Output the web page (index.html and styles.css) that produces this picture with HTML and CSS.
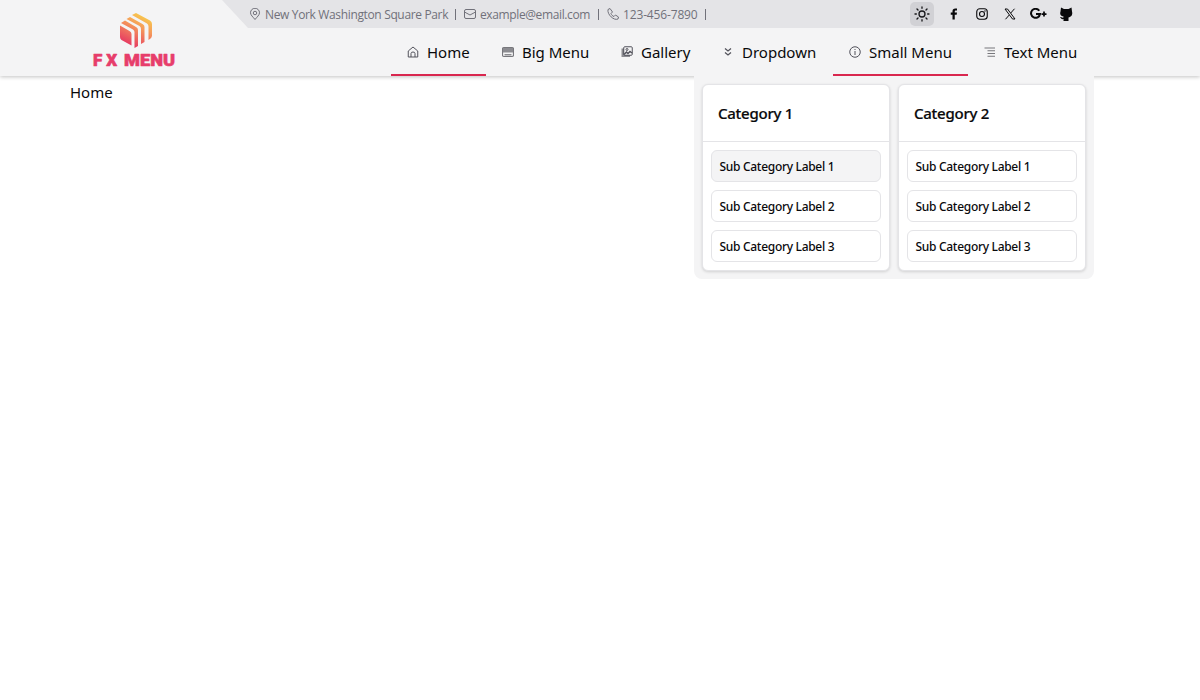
FILE: index.html
```html
<!DOCTYPE html>
<html lang="en">
<head>
<meta charset="utf-8">
<title>FX Menu</title>
<link rel="stylesheet" href="styles.css">
</head>
<body>
<header class="header">
  <a class="logo">
    <svg width="90" height="64" viewBox="0 0 90 64">
      <defs>
        <linearGradient id="cube" gradientUnits="userSpaceOnUse" x1="54" y1="0" x2="36" y2="36">
          <stop offset="0" stop-color="#f9e045"/><stop offset=".45" stop-color="#f59a5b"/><stop offset="1" stop-color="#e53363"/>
        </linearGradient>
      </defs>
      <g fill="url(#cube)">
        <path d="M28 15.500 37.500 21Q39.500 22 39.500 24V35.500L29.500 30Q28 29 28 27Z"/>
        <path d="M29 13 33 10.500 44 17Q46 18 46 20V36L42.500 38V22Q42.500 20.500 41 19.500Z"/>
        <path d="M34.500 9 38 7 50.500 14Q52.500 15 52.500 17V32L49 34V19Q49 17 47.500 16Z"/>
        <path d="M40 5 44 3 58 10.500Q60 11.500 60 14V26Q60 28 56.500 30V16.500Q56.500 14.500 55 13.500Z"/>
      </g>
      <g class="logo-text">
        <text x="1" y="56" textLength="24" lengthAdjust="spacing">FX</text>
        <text x="32" y="56" textLength="51" lengthAdjust="spacingAndGlyphs">MENU</text>
      </g>
    </svg>
  </a>
  <div class="topbar">
    <div class="contacts">
      <span class="contact place"><svg class="tiny" viewBox="0 0 24 24"><path d="M12 23C8 18 3 14 3 9.500a9 9 0 0 1 18 0C21 14 16 18 12 23Z"/><circle cx="12" cy="10" r="3.500"/></svg><span>New York Washington Square Park</span></span>
      <span class="contact mail"><svg class="tiny" viewBox="0 0 24 24"><rect x="1" y="3" width="22" height="18" rx="3"/><path d="m1 8 11 6 11-6"/></svg><span>example@email.com</span></span>
      <span class="contact phone"><svg class="tiny" viewBox="0 0 24 24"><path d="M2 3 6 1l5 7-3 3c1 3 3 5 6 6l3-3 6 4-1 4c-8 4-22-9-20-19Z"/></svg><span>123-456-7890</span></span>
    </div>
    <div class="socials">
      <span class="theme"><svg width="16" height="16" viewBox="0 0 24 24" fill="none" stroke="#18181b" stroke-width="2" stroke-linecap="round"><circle cx="12" cy="12" r="4.500"/><path d="M12 1.500v2M12 20.500v2M1.500 12h2M20.500 12h2M4.500 4.500l1.500 1.500M18 18l1.500 1.500M4.500 19.500 6 18M18 6l1.500-1.500"/></svg></span>
      <svg class="social" viewBox="0 0 24 24"><path d="M9 23V13.500H5.500V9H9V6.500C9 2.800 11 1 14.500 1H18v4h-2c-2 0-2.500.8-2.500 2.300V9H18l-.7 4.500h-3.800V23Z" fill="#09090b"/></svg>
      <svg class="social" viewBox="0 0 24 24" fill="none" stroke="#09090b" stroke-width="2.200"><rect x="1.500" y="1.500" width="21" height="21" rx="6"/><circle cx="12" cy="12" r="5"/><circle cx="18" cy="6" r=".5"/></svg>
      <svg class="social" viewBox="0 0 24 24" fill="none" stroke="#09090b" stroke-width="2"><path d="M2 2h5l15 20h-5ZM21 1.500 13.500 10M10.500 14 3 22.500"/></svg>
      <svg class="social wide" viewBox="0 0 34 24" fill="none" stroke="#09090b" stroke-width="4"><path d="M18.500 5.500A9 9 0 1 0 20 12h-8"/><path d="M28 7v10M23 12h10" stroke-width="3.500"/></svg>
      <svg class="social cat" viewBox="0 0 28 28"><path d="M4 1 10 4h9l6-3 1 8c2 7-2 11-7 12v7H9v-4c-4 1-5-1-7-4 3 0 4 2 7 1v-2C4 18 1 15 3 9Z" fill="#09090b"/></svg>
    </div>
  </div>
  <nav class="nav">
    <a class="item home active"><svg class="ico" viewBox="0 0 24 24"><path d="M2.500 10 12 2l9.500 8v12h-19ZM8 22v-7q0-3 4-3t4 3v7"/></svg><span>Home</span></a>
    <a class="item big"><svg class="ico" viewBox="0 0 24 24"><rect class="soft" x="1" y="3" width="22" height="18" rx="3"/><path class="shade" d="M2 4h20v9H2ZM5 16h14v3H5Z"/></svg><span>Big Menu</span></a>
    <a class="item gallery"><svg class="ico" viewBox="0 0 24 24"><path class="shade" d="M1 5h5v13h12v4H1Z"/><rect x="5.500" y="1.500" width="17" height="17" rx="2"/><circle cx="12" cy="7" r="2"/><path d="m6 17 5-5 3 3 4-4 4 3" stroke-width="3"/></svg><span>Gallery</span></a>
    <a class="item dropdown"><svg class="ico" viewBox="0 0 24 24"><path d="m6 5 6 5 6-5M6 13l6 5 6-5" stroke-width="2.500"/></svg><span>Dropdown</span></a>
    <a class="item small active"><svg class="ico" viewBox="0 0 24 24"><circle cx="12" cy="12" r="10.500"/><path d="M12 10v8M12 6v2"/></svg><span>Small Menu</span></a>
    <a class="item text"><svg class="ico" viewBox="0 0 24 24"><path class="soft" d="M1 4h21M7 9.500h15M7 15h15M7 20.500h15"/></svg><span>Text Menu</span></a>
    <div class="panel">
      <section class="card">
        <h2>Category 1</h2>
        <div class="links"><a class="link hover">Sub Category Label 1</a><a class="link">Sub Category Label 2</a><a class="link">Sub Category Label 3</a></div>
      </section>
      <section class="card">
        <h2>Category 2</h2>
        <div class="links"><a class="link">Sub Category Label 1</a><a class="link">Sub Category Label 2</a><a class="link">Sub Category Label 3</a></div>
      </section>
    </div>
  </nav>
</header>
<main class="content">Home</main>
</body>
</html>
```

FILE: styles.css
```css
* { box-sizing: border-box; }
html { height: 100%; }
body {
  margin: 0;
  min-height: 100vh;
  background: #fff;
  color: #09090b;
  font: 15px/24px "Noto Sans", "Open Sans", sans-serif;
}
svg { display: block; flex: none; }
.header {
  position: relative;
  display: grid;
  grid-template-columns: 222px 1fr;
  grid-template-rows: 28px 48px;
  height: 76px;
  background: #f4f4f5;
  box-shadow: 0 1px 4px rgba(0, 0, 0, .24);
}
.logo { grid-row: 1 / 3; padding: 10px 0 0 92px; }
.logo-text {
  font: 900 17px "Roboto", sans-serif;
  fill: #e73d6b;
  stroke: #e73d6b;
  stroke-width: .6;
  stroke-linejoin: round;
}
.topbar {
  display: flex;
  justify-content: space-between;
  align-items: center;
  padding: 0 128px 0 27px;
  background: #e4e4e7;
  clip-path: polygon(0 0, 100% 0, 100% 100%, 26px 100%);
}
.contacts { display: flex; align-items: center; gap: 8px; color: #71717a; font: 12px/16px "Open Sans", sans-serif; }
.contact { display: flex; align-items: center; gap: 4px; white-space: nowrap; position: relative; }
.contact span { padding-top: 1px; }
.contact::after { content: ""; position: absolute; right: 0; top: 3px; width: 1px; height: 11px; background: #71717a; }
.place { width: 207px; }
.place span { letter-spacing: -.35px; }
.mail { width: 135px; }
.mail span { letter-spacing: -.38px; }
.phone { width: 99px; }
.phone span { letter-spacing: -.15px; }
.tiny { width: 12px; height: 12px; fill: none; stroke: #71717a; stroke-width: 2; }
.socials { display: flex; align-items: center; gap: 16px; }
.theme { display: grid; place-items: center; width: 24px; height: 24px; border-radius: 5px; background: #d1d1d5; margin-right: -2px; }
.social { width: 12px; height: 12px; }
.wide { width: 17px; margin: 0 -3px 0 -2px; }
.cat { width: 14px; height: 14px; margin: 0 -1px; }
.nav { position: relative; display: flex; justify-content: flex-end; padding-right: 106px; }
.item {
  display: flex;
  align-items: center;
  gap: 8px;
  height: 48px;
  padding: 2px 0 0 16px;
  border-bottom: 2px solid transparent;
  white-space: nowrap;
  z-index: 2;
}
.item.active { border-color: #d9274f; }
.ico { width: 12px; height: 12px; fill: none; stroke: #52525b; stroke-width: 2; }
.soft { stroke: #77777c; stroke-width: 2.4; }
.shade { fill: #8b8b90; stroke: none; }
.home { width: 95px; }
.big { width: 119px; }
.gallery { width: 101px; }
.dropdown { width: 127px; }
.small { width: 135px; }
.text { width: 126px; }
.panel {
  position: absolute;
  top: 46px;
  right: 106px;
  width: 400px;
  height: 205px;
  padding: 10px 8px 8px;
  display: grid;
  grid-template-columns: 1fr 1fr;
  gap: 8px;
  background: #f4f4f5;
  border-radius: 0 0 8px 8px;
}
.card {
  border: 1px solid #e4e4e7;
  border-radius: 6px;
  background: #fff;
  box-shadow: 0 1px 3px rgba(0, 0, 0, .15);
}
.card h2 {
  margin: 0;
  height: 57px;
  padding: 16px 15px;
  font-size: 15px;
  font-weight: 500;
  letter-spacing: -.25px;
  -webkit-text-stroke: .2px;
  line-height: 25px;
  border-bottom: 1px solid #e4e4e7;
}
.links { display: flex; flex-direction: column; gap: 8px; padding: 8px; }
.link {
  height: 32px;
  padding: 0 7.5px;
  border: 1px solid #e4e4e7;
  border-radius: 6px;
  font-size: 12px;
  font-weight: 500;
  letter-spacing: -.3px;
  line-height: 31px;
  white-space: nowrap;
}
.link.hover { background: #f4f4f5; }
.content { padding: 4px 70px; }
```
